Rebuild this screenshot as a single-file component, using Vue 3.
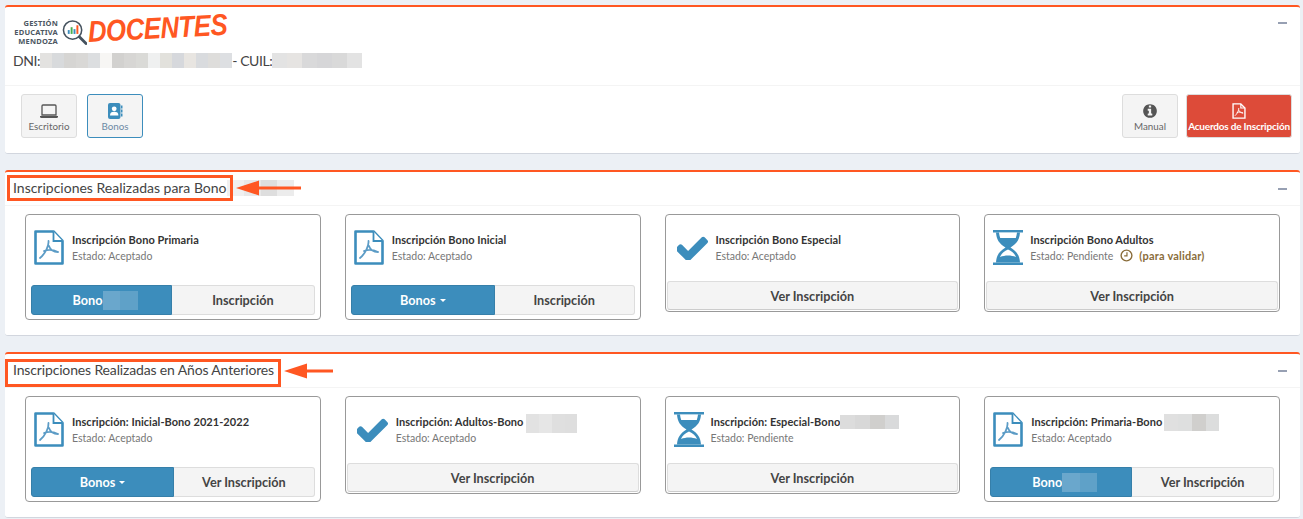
<script setup>
const sections = [
  {
    title: 'Inscripciones Realizadas para Bono',
    cards: [
      { icon: 'pdf', title: 'Inscripción Bono Primaria', state: 'Estado: Aceptado', left: 'Bono', leftRedact: true, right: 'Inscripción', leftWidth: 141 },
      { icon: 'pdf', title: 'Inscripción Bono Inicial', state: 'Estado: Aceptado', left: 'Bonos', caret: true, right: 'Inscripción', leftWidth: 144 },
      { icon: 'check', title: 'Inscripción Bono Especial', state: 'Estado: Aceptado', single: true },
      { icon: 'hourglass', title: 'Inscripción Bono Adultos', state: 'Estado: Pendiente', pending: true, single: true },
    ],
  },
  {
    title: 'Inscripciones Realizadas en Años Anteriores',
    cards: [
      { icon: 'pdf', title: 'Inscripción: Inicial-Bono 2021-2022', state: 'Estado: Aceptado', left: 'Bonos', caret: true, right: 'Ver Inscripción', leftWidth: 143 },
      { icon: 'check', title: 'Inscripción: Adultos-Bono', state: 'Estado: Aceptado', single: true, redact: ['#e2e2e2', '#e6e6e6', '#dfdfdf', '#dedede'], redactClass: 'tall' },
      { icon: 'hourglass', title: 'Inscripción: Especial-Bono', state: 'Estado: Pendiente', single: true, redact: ['#dcdcdc', '#d8d8d8', '#d0cfcd', '#d9dadb'], redactClass: 'flush' },
      { icon: 'pdf', title: 'Inscripción: Primaria-Bono', state: 'Estado: Aceptado', left: 'Bono', leftRedact: true, right: 'Ver Inscripción', leftWidth: 142, redact: ['#e0e0e0', '#dedfdf', '#d0cfcd', '#dcdddd'], redactClass: 'wide' },
    ],
  },
]
const dniBlocks = ['#e3e2e0', '#d8dadc', '#d6d5d3', '#d9d8d6', '#dcdee0', '#f7f6f4', '#d2d1cf', '#d7d6d4', '#dadad7', '#eff0f0', '#e2e1dc', '#d6d8dc', '#e8e5e1', '#d9dbde', '#dedddb', '#dddfe2']
const cuilBlocks = ['#e3e3e3', '#e6e4e2', '#d9d9da', '#d6d6d8', '#d9d9d9', '#e3e3e3']
const bonoBlocks = ['#6aa7cc', '#5fa1c8']
</script>

<template>
  <main class="page">
    <section class="box">
      <header class="head head-top">
        <div class="brand">
          <div class="brand-org">GESTIÓN<br />EDUCATIVA<br />MENDOZA</div>
          <svg class="brand-lens" viewBox="0 0 26 26">
            <circle cx="11" cy="11" r="9.500" fill="#fff" stroke="#45525e" stroke-width="1.600" />
            <rect x="6" y="11" width="2" height="4" fill="#3c8dbc" />
            <rect x="9" y="8" width="2" height="7" fill="#4caf50" />
            <rect x="12" y="10" width="2" height="5" fill="#3c8dbc" />
            <rect x="15" y="6" width="2" height="9" fill="#ff5722" />
            <path d="M18 18l7 7" stroke="#45525e" stroke-width="3" stroke-linecap="round" />
          </svg>
          <span class="brand-name">DOCENTES</span>
        </div>
        <div class="ident">
          <span>DNI:</span>
          <span class="redact redact-dni"><i v-for="(c, i) in dniBlocks" :key="i" :style="{ background: c }"></i></span>
          <span class="ident-cuil">- CUIL:</span>
          <span class="redact redact-cuil"><i v-for="(c, i) in cuilBlocks" :key="i" :style="{ background: c }"></i></span>
        </div>
        <span class="minus"></span>
      </header>
      <div class="tools">
        <a class="app-btn">
          <svg class="app-ico" viewBox="0 0 20 16">
            <path d="M4 2h12a1 1 0 0 1 1 1V12H3V3a1 1 0 0 1 1-1z" fill="none" stroke="#555" stroke-width="1.300" />
            <path d="M1 13h18v.500a1.500 1.500 0 0 1-1.500 1.500h-15A1.500 1.500 0 0 1 1 13.500z" fill="#555" />
          </svg>
          <span>Escritorio</span>
        </a>
        <a class="app-btn app-btn-active">
          <svg class="app-ico" viewBox="0 0 16 16">
            <rect x="1" y="0" width="12.500" height="16" rx="2" fill="#3c8dbc" />
            <rect x="14" y="2.500" width="1.500" height="3" fill="#3c8dbc" />
            <rect x="14" y="6.500" width="1.500" height="3" fill="#3c8dbc" />
            <rect x="14" y="10.500" width="1.500" height="3" fill="#3c8dbc" />
            <circle cx="7.200" cy="5.800" r="2.400" fill="#fff" />
            <path d="M3 12.500c0-2.800 1.400-3.800 4.200-3.800s4.200 1 4.200 3.800z" fill="#fff" />
          </svg>
          <span>Bonos</span>
        </a>
        <div class="tools-fill"></div>
        <a class="app-btn">
          <svg class="app-ico" viewBox="0 0 1792 1792">
            <path fill="#555" d="M1152 1376v-160q0-14-9-23t-23-9h-96v-512q0-14-9-23t-23-9h-320q-14 0-23 9t-9 23v160q0 14 9 23t23 9h96v320h-96q-14 0-23 9t-9 23v160q0 14 9 23t23 9h448q14 0 23-9t9-23zm-128-896v-160q0-14-9-23t-23-9h-192q-14 0-23 9t-9 23v160q0 14 9 23t23 9h192q14 0 23-9t9-23zm640 416q0 209-103 385.500t-279.500 279.500-385.500 103-385.500-103-279.500-279.500-103-385.500 103-385.500 279.500-279.500 385.500-103 385.500 103 279.500 279.500 103 385.500z" />
          </svg>
          <span>Manual</span>
        </a>
        <a class="app-btn app-btn-red">
          <svg class="app-ico" viewBox="0 0 30 35">
            <path d="M2 2h17l9 9v22H2z" fill="none" stroke="#fff" stroke-width="3" />
            <path d="M19 2v9h9" fill="none" stroke="#fff" stroke-width="2.500" />
            <path d="M14.500 11c.5 5-3.500 13-8.500 17M10 21c5-2 10-1 14 1M15 16c1 3 4 6 9 6" fill="none" stroke="#fff" stroke-width="2" />
          </svg>
          <span>Acuerdos de Inscripción</span>
        </a>
      </div>
    </section>

    <section v-for="(section, si) in sections" :key="si" class="box" :class="'box-' + si">
      <header class="head head-sec">
        <h3>{{ section.title }}</h3>
        <span class="minus"></span>
        <span v-if="si === 0" class="redact redact-title">
          <i style="background:#f0f0f0"></i><i style="background:#e8e8e8"></i><i style="background:#dedede"></i><i style="background:#ececec"></i>
        </span>
        <span class="mark"></span>
        <svg class="arrow" viewBox="0 0 66 16" preserveAspectRatio="xMinYMid slice">
          <path d="M0 8L23 .5v6h43v3H23v6z" fill="#ff5722" />
        </svg>
      </header>
      <div class="grid">
        <article v-for="(card, ci) in section.cards" :key="ci" class="card" :class="{ 'card-single': card.single }">
          <div class="info" :class="'info-' + card.icon">
            <svg v-if="card.icon === 'pdf'" class="ico ico-pdf" viewBox="0 0 30 35">
              <path d="M1.500 1.500h18l9 9.500v22.500h-27z" fill="#fff" stroke="#3c8dbc" stroke-width="2.600" stroke-linejoin="round" />
              <path d="M19.500 1.500v9.500h9" fill="#fff" stroke="#3c8dbc" stroke-width="1.800" />
              <path d="M14.500 11c.5 5-3.500 13-8.500 17M10 21c5-2 10-1 14 1M15 16c1 3 4 6 9 6" fill="none" stroke="#5c9cc6" stroke-width="1.800" stroke-linecap="round" />
            </svg>
            <svg v-else-if="card.icon === 'check'" class="ico ico-check" viewBox="200 300 1500 1150">
              <path fill="#3c8dbc" d="M1671 566q0 40-28 68l-724 724-136 136q-28 28-68 28t-68-28l-136-136-362-362q-28-28-28-68t28-68l136-136q28-28 68-28t68 28l294 295 656-657q28-28 68-28t68 28l136 136q28 28 28 68z" />
            </svg>
            <svg v-else class="ico ico-hour" viewBox="0 0 30 35">
              <path d="M0 0h30v2.500H0zM0 32.500h30V35H0z" fill="#3c8dbc" />
              <path d="M3 2.500c.5 7 3 11 9.500 15-6.500 4-9 8-9.500 15h24c-.5-7-3-11-9.500-15 6.500-4 9-8 9.500-15z" fill="#3c8dbc" />
              <path d="M6 2.500h18c-.2 2-.6 3.800-1.200 5.500H7.200C6.600 6.300 6.200 4.500 6 2.500z" fill="#fff" />
              <path d="M15 19.500c-4 1.800-6.800 4.500-8 7.500 5-2 11-2 16 0-1.200-3-4-5.700-8-7.500z" fill="#fff" />
            </svg>
            <div class="text">
              <div class="title">
                <span>{{ card.title }}</span>
                <span v-if="card.redact" class="redact redact-card" :class="card.redactClass"><i v-for="(c, i) in card.redact" :key="i" :style="{ background: c }"></i></span>
              </div>
              <div class="state">
                <span>{{ card.state }}</span>
                <template v-if="card.pending">
                  <svg class="clock" viewBox="0 0 14 14">
                    <circle cx="7" cy="7" r="5.800" fill="none" stroke="#8a6d3b" stroke-width="1.500" />
                    <path d="M7.500 3.500v4H4.500" fill="none" stroke="#8a6d3b" stroke-width="1.300" />
                  </svg>
                  <b>(para validar)</b>
                </template>
              </div>
            </div>
          </div>
          <button v-if="card.single" class="btn btn-full">Ver Inscripción</button>
          <div v-else class="split">
            <button class="btn btn-blue" :style="{ flexBasis: card.leftWidth + 'px' }">
              <span>{{ card.left }}</span>
              <span v-if="card.caret" class="caret"></span>
              <span v-if="card.leftRedact" class="redact redact-bono"><i v-for="(c, i) in bonoBlocks" :key="i" :style="{ background: c }"></i></span>
            </button>
            <button class="btn btn-light">{{ card.right }}</button>
          </div>
        </article>
      </div>
    </section>
  </main>
</template>

<style>
html, body { margin: 0; background: #ecf0f5; }
</style>

<style scoped>
.page {
  padding: 5px 3px 0 5px;
  height: 514px;
  overflow: hidden;
  display: flex;
  flex-direction: column;
  gap: 16px;
  font-family: Lato, "Noto Sans", sans-serif;
  color: #333;
}
.box {
  background: #fff;
  border-top: 2px solid #ff5722;
  border-bottom: 1px solid #d2d6de;
  border-radius: 3px;
  flex: none;
}
.head { position: relative; border-bottom: 1px solid #f4f4f4; }
.head-top { height: 79px; box-sizing: border-box; padding: 9px 8px 0; }
.head-sec { height: 34px; box-sizing: border-box; padding-left: 8px; }
.brand { display: flex; align-items: center; height: 32px; }
.brand-org {
  width: 45px;
  text-align: right;
  font-size: 7.500px;
  line-height: 9px;
  font-weight: 700;
  letter-spacing: .2px;
  color: #4c5762;
  font-family: "Noto Sans", sans-serif;
  white-space: nowrap;
}
.brand-lens { width: 25px; height: 26px; margin-left: 4px; flex: none; }
.brand-name {
  margin-left: 1px;
  font-family: "Liberation Sans", sans-serif;
  font-style: italic;
  font-weight: 700;
  font-size: 30px;
  line-height: 30px;
  letter-spacing: -.6px;
  color: #ff5722;
  transform: rotate(-3deg) scaleX(.86);
  transform-origin: left center;
  white-space: nowrap;
}
.ident {
  display: flex;
  align-items: center;
  font-size: 14px;
  letter-spacing: -.4px;
  height: 18px;
  margin-top: 3px;
  color: #444;
}
.redact { display: inline-flex; flex: none; }
.redact i { flex: 1; height: 100%; }
.redact-dni { width: 192px; height: 15px; }
.redact-cuil { width: 90px; height: 15px; }
.minus {
  position: absolute;
  right: 13px;
  top: 15px;
  width: 9px;
  height: 2px;
  background: #97a0b3;
}
.head-sec .minus { top: 16px; }
.tools { height: 67px; box-sizing: border-box; display: flex; padding: 8px 8px 0 16px; gap: 10px; }
.tools-fill { flex: 1; }
.tools-fill + .app-btn { margin-right: -2px; }
.app-btn {
  width: 56px;
  height: 44px;
  box-sizing: border-box;
  border: 1px solid #ddd;
  border-radius: 3px;
  background: #f4f4f4;
  display: flex;
  flex-direction: column;
  align-items: center;
  justify-content: flex-start;
  padding-top: 8px;
  font-size: 9.800px;
  line-height: 13px;
  color: #666;
  white-space: nowrap;
}
.app-ico { height: 16px; width: 20px; margin-bottom: 1px; flex: none; }
.app-btn-active { border-color: #3c8dbc; color: #6c8aa5; }
.app-btn-red {
  width: 106px;
  background: #dd4b39;
  border-color: #ddd;
  color: #fff;
  font-size: 10px;
  font-weight: 700;
  letter-spacing: -.2px;
}
.head-sec h3 {
  margin: 0;
  font-size: 14px;
  font-weight: 400;
  letter-spacing: 0;
  line-height: 32px;
  color: #444;
  white-space: nowrap;
  position: relative;
  z-index: 2;
  display: inline-block;
}
.box-1 .head-sec h3 { letter-spacing: -.15px; }
.mark {
  position: absolute;
  left: 2px;
  top: 3px;
  width: 226px;
  height: 26px;
  box-sizing: border-box;
  border: 3px solid #ff5722;
}
.arrow { position: absolute; left: 231px; top: 8px; width: 65px; height: 16px; }
.redact-title { position: absolute; left: 222px; top: 8px; width: 67px; height: 16px; }
.box-1 .mark { left: 0; top: 5px; width: 276px; height: 28px; }
.box-1 .arrow { left: 279px; top: 9px; width: 49px; height: 16px; }
.grid {
  display: grid;
  grid-template-columns: repeat(4, 1fr);
  gap: 24px;
  align-items: start;
  padding: 8px 20px 15px;
}
.card {
  border: 1px solid #999;
  border-radius: 4px;
  height: 106px;
  box-sizing: border-box;
  display: flex;
  flex-direction: column;
  justify-content: space-between;
  padding-bottom: 4px;
}
.card-single { height: 98px; padding-bottom: 0; }
.info { display: flex; align-items: center; height: 35px; margin-top: 15px; padding-left: 8px; }
.ico { flex: none; }
.ico-pdf { width: 30px; height: 35px; margin-right: 8px; }
.ico-check { width: 32px; height: 24px; margin: 0 7px 0 2px; }
.ico-hour { width: 30px; height: 35px; margin-right: 7px; }
.card-single .info-check { padding-left: 9px; }
.title {
  display: flex;
  align-items: center;
  height: 16px;
  font-size: 11px;
  letter-spacing: .05px;
  font-weight: 700;
  color: #333;
  white-space: nowrap;
}
.state {
  display: flex;
  align-items: center;
  height: 16px;
  font-size: 10.500px;
  color: #777;
  white-space: nowrap;
}
.state b { color: #8a6d3b; font-weight: 700; font-size: 11px; letter-spacing: .2px; }
.clock { width: 13px; height: 13px; margin: 0 6px 0 7px; }
.redact-card { height: 14px; width: 59px; }
.redact-card.tall { height: 19px; width: 51px; margin-left: 3px; margin-top: 3px; }
.redact-card.wide { width: 55px; height: 17px; margin-left: 2px; margin-top: 1px; }
.btn {
  font: inherit;
  font-weight: 700;
  font-size: 12.700px;
  color: #444;
  border: 1px solid #ddd;
  background: #f4f4f4;
  cursor: default;
  padding: 0;
  display: flex;
  align-items: center;
  justify-content: center;
}
.btn-full { height: 29px; border-radius: 3px; margin: 0 1px 1px; border-bottom-color: #ccc; }
.split { display: flex; margin: 0 5px; height: 30px; }
.btn-blue {
  flex: none;
  background: #3c8dbc;
  border-color: #367fa9;
  color: #fff;
  border-radius: 3px 0 0 3px;
}
.btn-light { flex: 1; border-left: 0; border-radius: 0 3px 3px 0; }
.redact-bono { width: 35px; height: 19px; margin-right: -7px; }
.caret {
  width: 0;
  height: 0;
  margin-left: 4px;
  border-top: 3px solid #fff;
  border-left: 3px solid transparent;
  border-right: 3px solid transparent;
}
</style>
